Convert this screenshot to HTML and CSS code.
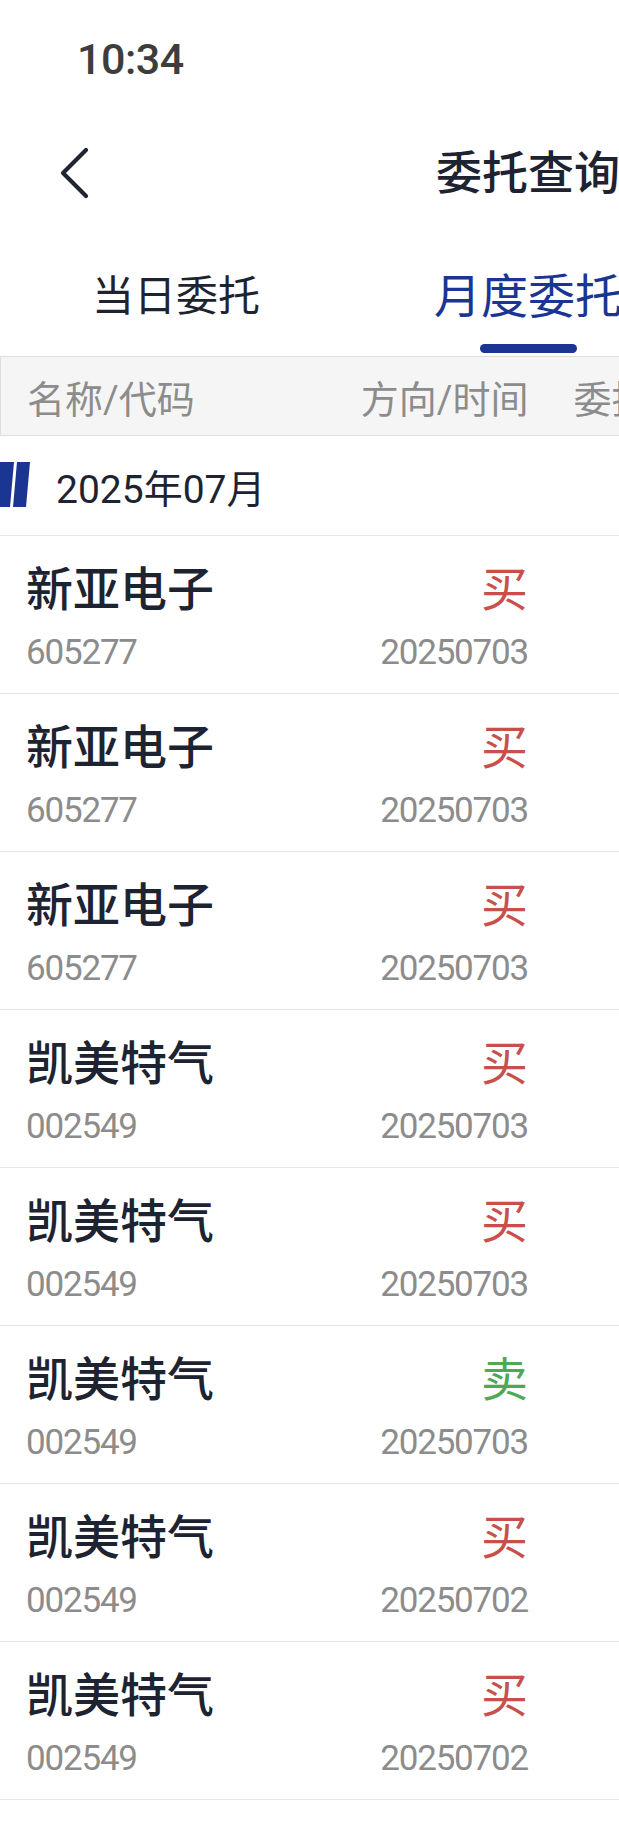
FILE: index.html
```html
<!DOCTYPE html>
<html lang="zh-CN">
<head>
  <meta charset="UTF-8" />
  <meta name="viewport" content="width=device-width, initial-scale=1" />
  <title>委托查询</title>
  <link rel="stylesheet" href="styles.css">
</head>
<body>
  <div class="screen">
    <div class="status-bar">
      <span class="time">10:34</span>
    </div>

    <div class="nav-bar">
      <div class="nav-left">
        <svg class="back" width="34" height="52" viewBox="0 0 34 52">
          <polyline points="28,3 5,26 28,49" fill="none" stroke="#1f2533" stroke-width="4.2" stroke-linecap="round" stroke-linejoin="round" />
        </svg>
      </div>
      <h1 class="title">委托查询</h1>
      <div></div>
    </div>

    <div class="tabs">
      <div class="tab"><span class="tab-text">当日委托</span><span class="tab-bar"></span></div>
      <div class="tab active"><span class="tab-text">月度委托</span><span class="tab-bar"></span></div>
      <div class="tab"><span class="tab-text">历史委托</span><span class="tab-bar"></span></div>
    </div>

    <div class="table-head">
      <div class="col">名称/代码</div>
      <div class="col right">方向/时间</div>
      <div class="col right">委托价/数量</div>
      <div class="col right">成交价/数量</div>
    </div>

    <div class="month">
      <svg class="month-mark" width="31" height="45" viewBox="0 0 31 45">
        <polygon points="0,0 14,0 10,45 0,45" fill="#1a3592" />
        <polygon points="17,0 30,0 26,45 13,45" fill="#1a3592" />
      </svg>
      <span class="month-text">2025年07月</span>
    </div>

    <div class="list" id="list"></div>
  </div>

  <script>
    const orders = [
      { name: '新亚电子', code: '605277', side: '买', date: '20250703', price: '18.350', qty: '100', deal: '18.350', dqty: '100' },
      { name: '新亚电子', code: '605277', side: '买', date: '20250703', price: '18.200', qty: '200', deal: '18.200', dqty: '200' },
      { name: '新亚电子', code: '605277', side: '买', date: '20250703', price: '18.100', qty: '100', deal: '0.000', dqty: '0' },
      { name: '凯美特气', code: '002549', side: '买', date: '20250703', price: '9.860', qty: '300', deal: '9.860', dqty: '300' },
      { name: '凯美特气', code: '002549', side: '买', date: '20250703', price: '9.820', qty: '200', deal: '9.820', dqty: '200' },
      { name: '凯美特气', code: '002549', side: '卖', date: '20250703', price: '10.150', qty: '500', deal: '10.150', dqty: '500' },
      { name: '凯美特气', code: '002549', side: '买', date: '20250702', price: '9.640', qty: '300', deal: '9.640', dqty: '300' },
      { name: '凯美特气', code: '002549', side: '买', date: '20250702', price: '9.600', qty: '200', deal: '9.600', dqty: '200' }
    ];

    const list = document.getElementById('list');
    for (const o of orders) {
      const row = document.createElement('div');
      row.className = 'row';
      const sideClass = o.side === '卖' ? 'sell' : 'buy';
      row.innerHTML = `
        <div class="col"><div class="main name">${o.name}</div><div class="sub">${o.code}</div></div>
        <div class="col right"><div class="main ${sideClass}">${o.side}</div><div class="sub">${o.date}</div></div>
        <div class="col right"><div class="main num">${o.price}</div><div class="sub">${o.qty}</div></div>
        <div class="col right"><div class="main num">${o.deal}</div><div class="sub">${o.dqty}</div></div>`;
      list.appendChild(row);
    }
  </script>
</body>
</html>
```

FILE: styles.css
```css
html, body {
  margin: 0;
  padding: 0;
  background: #fff;
  overflow: hidden;
}
body {
  font-family: Roboto, "Noto Sans CJK SC", sans-serif;
  color: #1e2331;
}
.screen {
  width: 1056px;
}
.status-bar {
  height: 106px;
  box-sizing: border-box;
  padding: 37px 0 0 77px;
}
.time {
  display: block;
  font-size: 43px;
  line-height: 44px;
  font-weight: 500;
  color: #3d3d3d;
  letter-spacing: -0.5px;
}
.nav-bar {
  height: 134px;
  display: grid;
  grid-template-columns: 1fr auto 1fr;
  align-items: center;
}
.nav-left {
  padding-left: 58px;
  display: flex;
  align-items: center;
}
.back {
  display: block;
}
.title {
  margin: 0;
  font-size: 46px;
  font-weight: 500;
  line-height: 60px;
  color: #1e2331;
}
.tabs {
  display: flex;
  height: 116px;
}
.tab {
  flex: 1;
  display: flex;
  flex-direction: column;
  align-items: center;
  padding-top: 29px;
}
.tab-text {
  font-size: 42px;
  line-height: 56px;
  color: #1e2331;
}
.tab-bar {
  width: 97px;
  height: 9px;
  margin-top: 19px;
  border-radius: 5px;
}
.tab.active .tab-text {
  font-size: 47px;
  color: #1a3592;
}
.tab.active .tab-bar {
  background: #1a3592;
}
.table-head, .row {
  display: grid;
  grid-template-columns: repeat(4, 1fr);
  padding: 0 26px;
}
.table-head {
  height: 80px;
  box-sizing: border-box;
  align-items: center;
  background: #f5f5f5;
  border: 1px solid #dedede;
  border-right: none;
  font-size: 38px;
  color: #8c8c8c;
}
.right {
  text-align: right;
}
.month {
  height: 100px;
  box-sizing: border-box;
  border-bottom: 1px solid #e6e6e6;
  display: flex;
  align-items: center;
}
.month-mark {
  display: block;
  margin-top: -2px;
}
.month-text {
  margin-left: 25px;
  font-size: 39px;
  color: #1e2331;
}
.row {
  height: 158px;
  box-sizing: border-box;
  padding-top: 25px;
  border-bottom: 1px solid #e6e6e6;
}
.main {
  font-size: 47px;
  line-height: 58px;
  color: #1e2331;
}
.main.name {
  font-weight: 500;
}
.main.num {
  font-size: 40px;
}
.sub {
  margin-top: 14px;
  font-size: 35px;
  line-height: 40px;
  letter-spacing: -1.2px;
  color: #8c8c8c;
}
.buy {
  color: #c9504a;
}
.sell {
  color: #4fa954;
}
```
